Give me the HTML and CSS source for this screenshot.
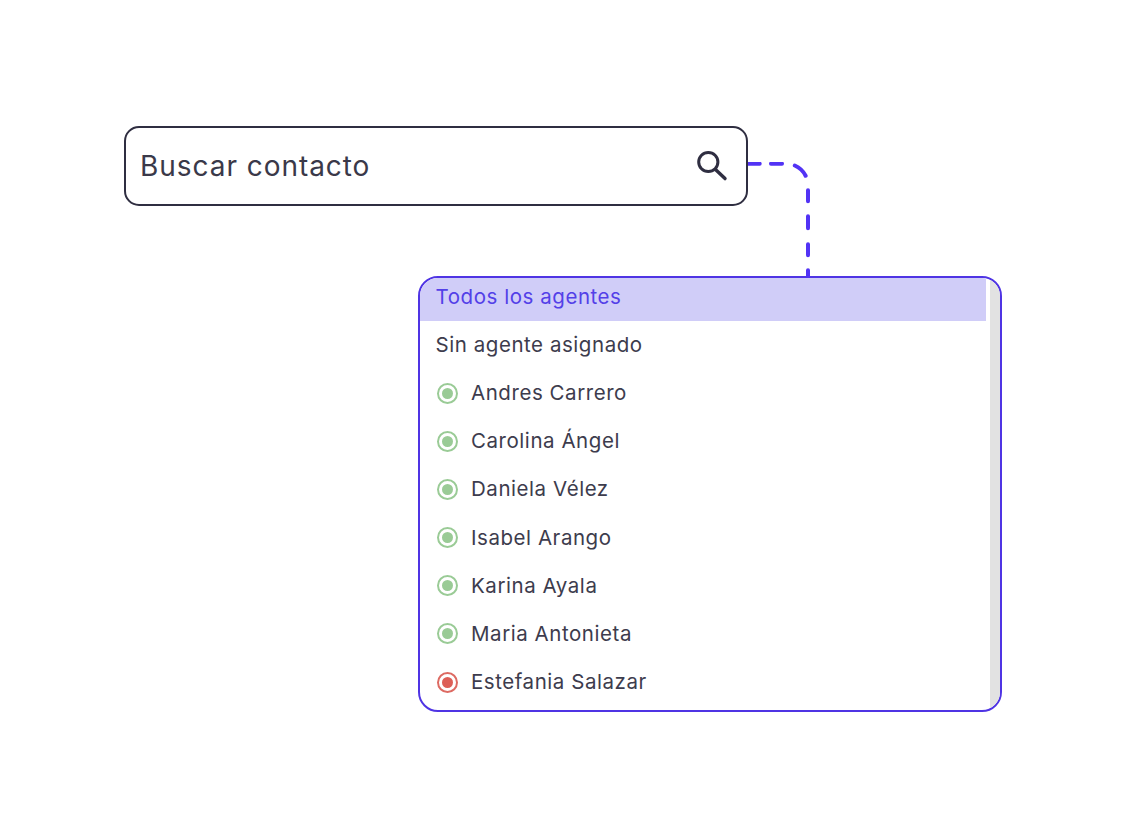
FILE: index.html
```html
<!DOCTYPE html>
<html lang="es">
<head>
<meta charset="utf-8">
<title>Buscar contacto</title>
<link rel="stylesheet" href="styles.css">
</head>
<body>
<main class="canvas">
  <div class="search">
    <span class="search-label">Buscar contacto</span>
    <svg class="search-icon" width="32" height="32" viewBox="0 0 32 32" fill="none" stroke="#2f2e41" stroke-linecap="round">
      <circle cx="11.3" cy="12" r="9.6" stroke-width="3"/>
      <path d="M18.5 19.5L28 28.6" stroke-width="3.4"/>
    </svg>
  </div>
  <svg class="connector" width="64" height="116" viewBox="0 0 64 116" fill="none">
    <path d="M0 1.7H38A22 22 0 0 1 60 23.7V114" stroke="#5233f5" stroke-width="4" stroke-linecap="round" stroke-dasharray="11.7 11.3 11 13 15 14.9 11 15 12 16 11 15 30"/>
  </svg>
  <div class="dropdown">
    <div class="list">
      <div class="row row-selected">Todos los agentes</div>
      <div class="row">Sin agente asignado</div>
      <div class="row"><span class="dot dot-on"></span>Andres Carrero</div>
      <div class="row"><span class="dot dot-on"></span>Carolina Ángel</div>
      <div class="row"><span class="dot dot-on"></span>Daniela Vélez</div>
      <div class="row"><span class="dot dot-on"></span>Isabel Arango</div>
      <div class="row"><span class="dot dot-on"></span>Karina Ayala</div>
      <div class="row"><span class="dot dot-on"></span>Maria Antonieta</div>
      <div class="row"><span class="dot dot-off"></span>Estefania Salazar</div>
    </div>
    <div class="scrollbar"></div>
  </div>
</main>
</body>
</html>
```

FILE: styles.css
```css
* { box-sizing: border-box; }
html, body { margin: 0; background: #fff; }
body { font-family: "Inter", "Liberation Sans", sans-serif; color: #3d3c4d; }
.canvas {
  position: relative;
  width: 1126px;
  height: 838px;
  padding: 126px 0 0 124px;
}
.search {
  display: flex;
  align-items: center;
  justify-content: space-between;
  width: 624px;
  height: 80px;
  padding: 0 17px 0 14px;
  border: 2px solid #2f2e41;
  border-radius: 15px;
}
.search-label { font-size: 28px; color: #3a3949; letter-spacing: 0.95px; }
.connector { position: absolute; left: 748px; top: 162px; }
.dropdown {
  display: flex;
  justify-content: space-between;
  width: 584px;
  height: 436px;
  margin: 70px 0 0 294px;
  border: 2px solid #4f34e4;
  border-radius: 20px;
  overflow: hidden;
}
.list { width: 566px; }
.row {
  display: flex;
  align-items: center;
  height: 48.15px;
  padding: 0 0 1px 15.5px;
  font-size: 20.5px;
  letter-spacing: 0.55px;
  color: #3d3c4d;
}
.row-selected {
  height: 43px;
  padding-bottom: 6px;
  background: #d0cdf8;
  color: #5340e8;
}
.dot {
  width: 21px;
  height: 21px;
  margin: 1px 13px 0 1.5px;
  border: 2.5px solid;
  border-radius: 50%;
  background-clip: content-box;
  padding: 3px;
}
.dot-on { border-color: #9acb96; background-color: #9acb96; }
.dot-off { border-color: #dd6a62; background-color: #dd5f57; }
.scrollbar { width: 10px; background: #e2e2e2; }
```
